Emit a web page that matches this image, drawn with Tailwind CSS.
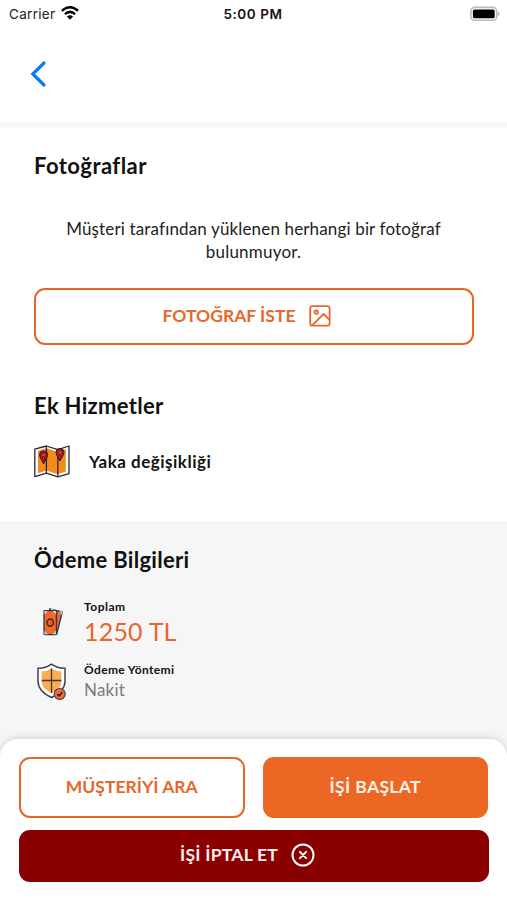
<!DOCTYPE html>
<html lang="tr">
<head>
<meta charset="utf-8">
<title>Ödeme Bilgileri</title>
<script src="https://cdn.jsdelivr.net/npm/@tailwindcss/browser@4"></script>
</head>
<body class="bg-white">
<div class="w-[507px] h-[900px] overflow-hidden flex flex-col bg-white text-[#111] font-['Lato','Noto_Sans',sans-serif]">
  <header class="h-[128px] shrink-0 border-b-6 border-[#f7f7f7]">
    <div class="h-7 grid grid-cols-3 items-center pl-[9px] pr-[7px] font-['Inter',sans-serif] text-[13.5px]">
      <div class="flex items-center gap-[6px] text-[#222]">
        <span class="tracking-[0.3px]">Carrier</span>
        <svg class="w-[18px] h-[14px] -mt-0.5" viewBox="0 0 18 14" fill="none" stroke="#000" stroke-width="2.5"><path d="M.9 4.8Q9-2.2 17.1 4.8"/><path d="M3.9 8.1Q9 3.7 14.1 8.1"/><path d="M9 13.7 5.9 10.5Q9 7.9 12.1 10.5Z" fill="#000" stroke="none"/></svg>
      </div>
      <div class="text-center font-semibold tracking-[0.55px] pr-[2px] -ml-px">5:00 PM</div>
      <div class="flex justify-end -mt-px"><svg class="w-[31px] h-4" viewBox="0 0 31 16"><rect x="1.9" y="1.4" width="25.8" height="12.8" rx="3.8" fill="#fff" stroke="#bcbcbc" stroke-width="1.6"/><rect x="3.9" y="3.4" width="21.8" height="8.8" rx="1.5" fill="#000"/><path d="M28.9 5.4q3 2.2 0 4.6z" fill="#aaa"/></svg></div>
    </div>
    <svg class="ml-[29px] mt-[31px] w-5 h-[30px]" viewBox="0 0 20 30" fill="none" stroke="#087cf5" stroke-width="3.2" stroke-linecap="round" stroke-linejoin="miter"><path d="M15 4 3.8 15 15 26"/></svg>
  </header>

  <section class="h-[393px] shrink-0 px-[34px]">
    <h2 class="pt-[23px] text-[22px] leading-[30px] font-bold tracking-[0.45px]">Fotoğraflar</h2>
    <p class="mt-9 text-center text-[17px] leading-[23px] text-[#222]"><span class="tracking-[0.15px]">Müşteri tarafından yüklenen herhangi bir fotoğraf</span><br><span class="tracking-[0.2px]">bulunmuyor.</span></p>
    <button class="mt-[25px] w-[440px] h-[57px] pr-[14px] pb-px flex items-center justify-center gap-[14px] rounded-[11px] border-2 border-[#e7672b] text-[#e7672b] text-[17.5px] font-bold">
      <span>FOTOĞRAF İSTE</span>
      <svg class="w-[22px] h-[22px]" viewBox="0 0 22 22" fill="none" stroke="#e7672b" stroke-width="1.8" stroke-linejoin="round"><rect x="1.2" y="1.2" width="19.4" height="19.4" rx="2.2"/><circle cx="7.2" cy="7.2" r="1.7"/><path d="M3.2 20.300 14.600 9l5.900 5.800"/></svg>
    </button>
    <h2 class="mt-[46px] text-[22px] leading-[30px] font-bold tracking-[0.3px]">Ek Hizmetler</h2>
    <div class="mt-[23px] flex items-center gap-[19px]">
      <svg class="w-9 h-9" viewBox="0 0 36 36" stroke-linejoin="round"><path d="M.8 5.200 12.400 2l11.400 3.600L35 2v27.600l-11.200 3.200-11.400-3.600L.8 32.600Z" fill="#fff" stroke="#292441" stroke-width="1.300"/><path d="m4 6.800 8.400-2.600 11.400 3.600 8-2.600v22.200l-8 2.800-11.400-3.600L4 29.200Z" fill="#f58a1d"/><path d="M12.400 2v27.200M23.800 5.600v27.200" stroke="#292441" stroke-width="1.300"/><path d="M9.600 20C8 16.500 5.600 13.500 5.600 10.900a4 4 0 0 1 8 0C13.600 13.500 11.200 16.500 9.600 20ZM26 17c-1.600-3.500-4-6-4-8.600a4 4 0 0 1 8 0C30 11 27.600 13.500 26 17Z" fill="#9c1f17" stroke="#31172b"/><circle cx="9.600" cy="10.900" r="1.200" fill="#e05330"/><circle cx="26" cy="8.400" r="1.200" fill="#e05330"/></svg>
      <span class="text-[17px] leading-6 -mt-px font-bold tracking-[0.5px]">Yaka değişikliği</span>
    </div>
  </section>

  <section class="h-[218px] shrink-0 bg-[#f6f6f6] px-[34px]">
    <h2 class="pt-6 text-[22px] leading-[30px] font-bold tracking-[0.3px]">Ödeme Bilgileri</h2>
    <div class="mt-[22px] flex items-center h-[50px]">
      <div class="w-[50px] pl-[9px]"><svg class="w-5 h-[28px]" viewBox="0 0 20 28" stroke-linejoin="round"><path d="m6.500 1 12.800 3-5.500 22-5-1Z" fill="#e9652c" stroke="#34364c" stroke-width="1.300"/><path d="m8 1.500 3 .8m5.400 1.300 2.500.7-.6 2.200" stroke="#c9cbe0" stroke-width="1.500" fill="none"/><rect x="1" y="2.600" width="12.400" height="24" rx=".8" fill="#f26a2a" stroke="#34364c" stroke-width="1.300"/><path d="M2 6V3.600h2.300M10 3.600h2.400V6M2 23.200v2.400h2.300M10 25.600h2.400v-2.400" stroke="#d5d4e2" stroke-width="1.300" fill="none"/><ellipse cx="7.200" cy="14.600" rx="3.200" ry="3.700" fill="#ed5e25" stroke="#4a2a2b" stroke-width="1.500"/></svg></div>
      <div>
        <div class="text-[12px] leading-[17px] font-bold tracking-[0.5px]">Toplam</div>
        <div class="text-[25px] leading-[32px] tracking-[0.2px] text-[#e7672b]">1250 TL</div>
      </div>
    </div>
    <div class="mt-[14px] flex items-center h-[42px]">
      <div class="w-[50px] pl-[3px]"><svg class="w-[30px] h-[38px]" viewBox="0 0 30 38" stroke-linejoin="round"><path d="M14.500 1.200Q20 5.400 28 5.300V18c0 8-5.500 12.800-13.500 16.500C6.500 30.800 1 26 1 18V5.300Q9 5.400 14.500 1.200Z" fill="#fff" stroke="#3e4254" stroke-width="1.500"/><path d="M14.500 5.500Q18.800 8.300 24.300 8.500V18c0 5.800-3.500 8.800-9.800 11.800C8.200 26.800 4.700 23.800 4.700 18V8.500Q10.200 8.300 14.500 5.500Z" fill="#f9ac52"/><path d="M14.500 5.500v24.500M4.700 17.500h19.600" stroke="#4b3534" stroke-width="1.300"/><circle cx="22.700" cy="31" r="5.500" fill="#ed6c3a" stroke="#3e4254" stroke-width="1.200"/><path d="m20.200 31 1.900 1.900 3.200-3.800" stroke="#2b2028" stroke-width="1.500" fill="none"/></svg></div>
      <div>
        <div class="text-[12px] leading-4 font-bold tracking-[0.35px]">Ödeme Yöntemi</div>
        <div class="text-[17px] leading-6 tracking-[0.2px] text-[#7b7b7b]">Nakit</div>
      </div>
    </div>
  </section>

  <div class="flex-1 bg-[#f6f6f6]">
    <footer class="h-[161px] rounded-t-[18px] bg-white px-[19px] pt-[18px] shadow-[0_-1px_8px_rgba(0,0,0,0.14)] text-[17.5px] font-bold">
      <div class="flex gap-[18px]">
        <button class="w-[226px] h-[61px] rounded-[11px] border-2 border-[#e7672b] text-[#e7672b]">MÜŞTERİYİ ARA</button>
        <button class="w-[226px] h-[61px] rounded-[11px] bg-[#ec6723] text-[#fff1e8] tracking-[0.35px]">İŞİ BAŞLAT</button>
      </div>
      <button class="mt-3 w-[470px] h-[52px] pr-[13px] pb-[2px] rounded-[11px] bg-[#8a0000] text-[#ffeeee] flex items-center justify-center gap-[13px]">
        <span class="tracking-[0.25px]">İŞİ İPTAL ET</span>
        <svg class="w-6 h-6" viewBox="0 0 24 24" fill="none" stroke="#fff" stroke-width="2" stroke-linecap="round"><circle cx="12" cy="12" r="10.500"/><path d="m8.900 8.900 6.200 6.200m0-6.200-6.200 6.200"/></svg>
      </button>
    </footer>
  </div>
</div>
</body>
</html>
